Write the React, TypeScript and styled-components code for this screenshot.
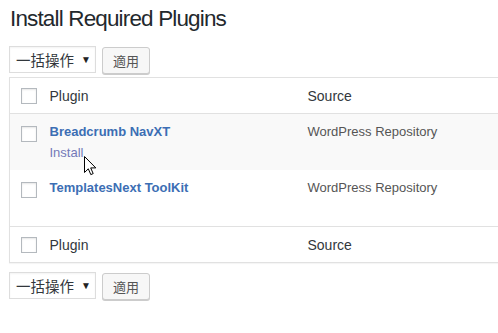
import React from "react";
import styled, { createGlobalStyle } from "styled-components";

const Global = createGlobalStyle`
  html, body { margin: 0; padding: 0; background: #fff; overflow: hidden; }
  body { font-family: "Liberation Sans", Arial, sans-serif; color: #32373c; font-size: 13px; }
`;

const Page = styled.div`
  position: relative;
  width: 498px;
  height: 333px;
  padding: 4px 0 0 9px;
  box-sizing: border-box;
  overflow: hidden;
`;

const Title = styled.h1`
  margin: 0 0 12px 1px;
  font-size: 22.5px;
  font-weight: 400;
  letter-spacing: -0.85px;
  line-height: 29.9px;
  color: #23282d;
`;

const Actions = styled.div<{ $top?: boolean }>`
  display: flex;
  align-items: flex-start;
  gap: 6px;
  margin: ${(p) => (p.$top ? "0 0 3px" : "9px 0 0")};
`;

const Select = styled.div`
  box-sizing: border-box;
  width: 87px;
  height: 27px;
  border: 1px solid #ddd;
  background: #fff;
  box-shadow: inset 0 1px 2px rgba(0, 0, 0, 0.05);
  display: flex;
  align-items: center;
  justify-content: space-between;
  padding: 0 4px 0 6px;
  font-family: "Liberation Sans", "Noto Sans CJK JP", sans-serif;
  font-size: 14.5px;
  color: #32373c;
`;

const Arrow = styled.span`
  font-size: 10px;
  color: #222;
`;

const Button = styled.div`
  box-sizing: border-box;
  width: 48px;
  height: 27px;
  margin-top: 1px;
  border: 1px solid #ccc;
  border-radius: 3px;
  background: #f7f7f7;
  box-shadow: 0 1px 0 #ccc;
  display: flex;
  align-items: center;
  justify-content: center;
  font-family: "Liberation Sans", "Noto Sans CJK JP", sans-serif;
  font-size: 13px;
  color: #555;
`;

const Table = styled.table`
  width: 580px;
  border-collapse: collapse;
  border: 1px solid #e1e1e1;
  box-shadow: 0 1px 1px rgba(0, 0, 0, 0.04);
  table-layout: fixed;
`;

const Row = styled.tr<{ $alt?: boolean; $edge?: "top" | "bottom" }>`
  background: ${(p) => (p.$alt ? "#f9f9f9" : "#fff")};
  border-bottom: ${(p) => (p.$edge === "top" ? "1px solid #e1e1e1" : "none")};
  border-top: ${(p) => (p.$edge === "bottom" ? "1px solid #e1e1e1" : "none")};
`;

const CheckCell = styled.td<{ $head?: boolean }>`
  width: 30px;
  padding: ${(p) => (p.$head ? "1px 0 0 11px" : "12px 0 0 11px")};
  vertical-align: ${(p) => (p.$head ? "middle" : "top")};
  box-sizing: border-box;
`;

const HeadCell = styled.td<{ $w?: number }>`
  width: ${(p) => (p.$w ? `${p.$w}px` : "auto")};
  height: 36px;
  padding: 2px 10px 0;
  font-size: 14px;
  line-height: 19.6px;
  color: #32373c;
  vertical-align: middle;
  box-sizing: border-box;
`;

const Cell = styled.td`
  padding: 8px 10px 7px;
  vertical-align: top;
  font-size: 13px;
  line-height: 19.5px;
  color: #555;
`;

const Box = styled.span`
  display: block;
  box-sizing: border-box;
  width: 16px;
  height: 16px;
  border: 1px solid #b4b9be;
  background: #fff;
  box-shadow: inset 0 1px 2px rgba(0, 0, 0, 0.1);
`;

const Name = styled.div`
  font-weight: 700;
  color: #3c6eb4;
`;

const RowActions = styled.div<{ $shown?: boolean }>`
  padding-top: 2px;
  color: #7479b8;
  visibility: ${(p) => (p.$shown ? "visible" : "hidden")};
`;

const Cursor = styled.svg`
  position: absolute;
  left: 84px;
  top: 156px;
  pointer-events: none;
`;

const plugins = [
  { name: "Breadcrumb NavXT", source: "WordPress Repository", hover: true },
  { name: "TemplatesNext ToolKit", source: "WordPress Repository", hover: false },
];

function BulkActions({ top }: { top?: boolean }) {
  return (
    <Actions $top={top}>
      <Select>
        <span>一括操作</span>
        <Arrow>▼</Arrow>
      </Select>
      <Button>適用</Button>
    </Actions>
  );
}

export default function App() {
  return (
    <>
      <Global />
      <Page>
        <Title>Install Required Plugins</Title>
        <BulkActions top />
        <Table>
          <tbody>
            <Row $edge="top">
              <CheckCell $head>
                <Box />
              </CheckCell>
              <HeadCell $w={258}>Plugin</HeadCell>
              <HeadCell>Source</HeadCell>
            </Row>
            {plugins.map((p, i) => (
              <Row key={p.name} $alt={i % 2 === 0}>
                <CheckCell>
                  <Box />
                </CheckCell>
                <Cell>
                  <Name>{p.name}</Name>
                  <RowActions $shown={p.hover}>Install</RowActions>
                </Cell>
                <Cell>{p.source}</Cell>
              </Row>
            ))}
            <Row $edge="bottom">
              <CheckCell $head>
                <Box />
              </CheckCell>
              <HeadCell>Plugin</HeadCell>
              <HeadCell>Source</HeadCell>
            </Row>
          </tbody>
        </Table>
        <BulkActions />
        <Cursor width="13" height="20" viewBox="0 0 13 20">
          <path
            d="M0.5 0.5 L0.5 16.5 L4.3 12.8 L6.8 18.6 L9.2 17.6 L6.7 11.9 L11.8 11.9 Z"
            fill="#fff"
            stroke="#000"
            strokeWidth="1"
            strokeLinejoin="miter"
          />
        </Cursor>
      </Page>
    </>
  );
}
